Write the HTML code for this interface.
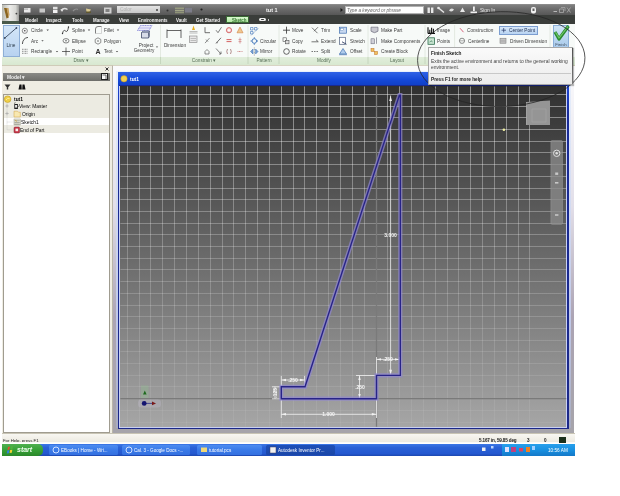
<!DOCTYPE html>
<html><head><meta charset="utf-8">
<style>
html,body{margin:0;padding:0;width:620px;height:496px;overflow:hidden;background:#fff;font-family:"Liberation Sans",sans-serif;}
.a{position:absolute;}
.t{position:absolute;line-height:10px;color:#3a3a3a;white-space:nowrap;will-change:transform;}
svg{position:absolute;left:0;top:0;overflow:visible;}
</style></head><body>
<div class="a" style="left:1.5px;top:4px;width:573.5px;height:10.5px;background:linear-gradient(#9a9a9a 0,#808080 8%,#6a6a6a 50%,#575757 100%);"></div>
<div class="a" style="left:1.5px;top:14.5px;width:573.5px;height:9px;background:#3a3d3a;"></div>
<div class="a" style="left:2px;top:4.9px;width:17.3px;height:18.6px;background:linear-gradient(90deg,#b8b8b0,#ececea 45%,#d8d8d4 80%,#9a9a98);"></div>
<div class="a" style="left:2px;top:20.5px;width:17.3px;height:3px;background:#4a5a4a;"></div>
<svg width="620" height="60">
<path d="M4 8L7 8L8.8 17.5L6.5 18.5Z" fill="#8a6420"/>
<path d="M6.5 8L8.5 8L9.5 15L8.5 17Z" fill="#c8a060"/>
<circle cx="16.4" cy="13.6" r="0.9" fill="#404040"/>
<rect x="24" y="8" width="6.5" height="4.5" fill="#e8e8e8"/><rect x="24" y="8.5" width="4" height="1.2" fill="#b0b0b0"/>
<rect x="39.5" y="8.5" width="5.5" height="4" fill="#c8c8c8"/>
<rect x="53" y="6.8" width="4.5" height="2.6" fill="#e0e0e0"/><rect x="53" y="10" width="4.5" height="3" fill="#f0f0f0"/>
<path d="M61 10.5Q64 7 67.5 9.5" stroke="#e0e0e0" stroke-width="1.4" fill="none"/><path d="M60.5 9L62 12L63.5 9.5Z" fill="#e0e0e0"/>
<path d="M73 11Q75.5 8 78 9.5" stroke="#909090" stroke-width="1.2" fill="none"/>
<path d="M86 8.5L91 9.5L89 12.5L86.5 12Z" fill="#d8c890"/><rect x="86" y="11.5" width="5" height="1.5" fill="#605830"/>
<rect x="104" y="7.5" width="7.5" height="6" fill="#d0d0d0"/><rect x="105.5" y="9" width="4" height="3" fill="#808080"/>
<rect x="175" y="7.5" width="9" height="1.6" fill="#989c80"/><rect x="175" y="9.8" width="9" height="1.6" fill="#a4a888"/><rect x="175" y="12" width="9" height="1.3" fill="#909478"/><rect x="185" y="8" width="7" height="4.5" fill="#7c7c88"/>
<circle cx="167.5" cy="10.5" r="1" fill="#303030"/>
<circle cx="201.5" cy="9.5" r="1.1" fill="#202020"/>
<path d="M340.5 8L343 10L340.5 12Z" fill="#1a1a1a"/>
<rect x="427.5" y="7.5" width="2.4" height="5.5" fill="#e8e8e8"/><rect x="431" y="7.5" width="2.4" height="5.5" fill="#e8e8e8"/>
<path d="M438 7.5L444 12.5" stroke="#e8e8e8" stroke-width="1.5"/><circle cx="438.5" cy="8" r="1.3" fill="#e8e8e8"/>
<path d="M449 10.5Q451 7 454 9.5Q452 13 449 10.5Z" fill="#e0e0e0"/>
<path d="M462.5 7.5L465 12H460Z" fill="#e8e8e8"/>
<rect x="473" y="6.5" width="1.8" height="4.5" fill="#f0f0f0"/><rect x="470.5" y="11.5" width="6.5" height="1.6" fill="#f0f0f0"/>
<rect x="531" y="7" width="5" height="6.5" rx="2" fill="#f0f0f0"/><rect x="532.5" y="8.5" width="2" height="2.5" fill="#606060"/>
<rect x="553.5" y="11" width="3.5" height="1" fill="#b8b8b8"/>
<path d="M559.5 9H563.5V12.5H559.5ZM561 7.5H565V11" fill="none" stroke="#a8a8a8" stroke-width="0.8"/>
<path d="M567 7.5L570.5 12.5M570.5 7.5L567 12.5" stroke="#a0a0a0" stroke-width="1"/>
</svg>
<div class="a" style="left:117px;top:5.6px;width:43px;height:7.6px;background:linear-gradient(#e4e4e4,#c8c8c8);"></div>
<div class="t" style="left:120px;top:5px;font-size:4.9px;color:#b0b0b0;">Color</div>
<div class="a" style="left:156px;top:8.5px;width:2px;height:2px;background:#404040;border-radius:1px;"></div>
<div class="t" style="left:265.5px;top:5px;font-size:5.5px;color:#f4f4f4;font-weight:bold;">tut 1</div>
<div class="a" style="left:344.5px;top:5.5px;width:79.5px;height:8.8px;background:#fdfdfd;border:0.5px solid #b0b0b0;box-sizing:border-box;"></div>
<div class="t" style="left:347px;top:6px;font-size:4.7px;color:#6a6a6a;font-style:italic;">Type a keyword or phrase</div>
<div class="t" style="left:479.5px;top:6px;font-size:4.9px;color:#e8e8e8;">Sign In</div>
<div class="a" style="left:225.8px;top:15.6px;width:23.5px;height:7.9px;background:linear-gradient(#d8f8d0,#b0e8a0);border:0.6px solid #3a6a34;box-sizing:border-box;"></div>
<div class="t" style="left:24.8px;top:16px;font-size:4.45px;color:#f4f4f4;font-weight:bold;">Model</div>
<div class="t" style="left:46px;top:16px;font-size:4.45px;color:#f4f4f4;font-weight:bold;">Inspect</div>
<div class="t" style="left:72.2px;top:16px;font-size:4.45px;color:#f4f4f4;font-weight:bold;">Tools</div>
<div class="t" style="left:92.5px;top:16px;font-size:4.45px;color:#f4f4f4;font-weight:bold;">Manage</div>
<div class="t" style="left:118.6px;top:16px;font-size:4.45px;color:#f4f4f4;font-weight:bold;">View</div>
<div class="t" style="left:137.9px;top:16px;font-size:4.45px;color:#f4f4f4;font-weight:bold;">Environments</div>
<div class="t" style="left:176.3px;top:16px;font-size:4.45px;color:#f4f4f4;font-weight:bold;">Vault</div>
<div class="t" style="left:195.5px;top:16px;font-size:4.45px;color:#f4f4f4;font-weight:bold;">Get Started</div>
<div class="t" style="left:231.5px;top:16px;font-size:4.45px;color:#3e7a38;font-weight:bold;">Sketch</div>
<div class="a" style="left:258.5px;top:17.8px;width:7px;height:3.6px;background:#f0f0f0;border-radius:2px;"></div>
<div class="a" style="left:260.5px;top:18.8px;width:3px;height:1.6px;background:#3a3d3a;border-radius:1px;"></div>
<div class="a" style="left:267.5px;top:19px;width:1.5px;height:1.5px;background:#c0c0c0;"></div>
<div class="a" style="left:1.5px;top:23.5px;width:573.5px;height:33px;background:#f7faf8;"></div>
<div class="a" style="left:1.5px;top:56.5px;width:573.5px;height:8.3px;background:linear-gradient(#e2eedc,#d8e8d0);"></div>
<div class="a" style="left:1.5px;top:64.8px;width:573.5px;height:1px;background:#cfcbb8;"></div>
<div class="a" style="left:2.5px;top:24.5px;width:17px;height:32px;background:linear-gradient(#d4e6f8,#b8d2f0);border:0.6px solid #8eaed6;box-sizing:border-box;"></div>
<div class="a" style="left:499.3px;top:26.2px;width:38.7px;height:8.8px;background:linear-gradient(#d8e8fa,#b8d4f2);border:0.6px solid #7c9ed0;box-sizing:border-box;"></div>
<div class="a" style="left:552.7px;top:24.5px;width:16.8px;height:23.5px;background:linear-gradient(#d0e4f6,#aacbec);border:0.6px solid #8aaed8;box-sizing:border-box;"></div>
<div class="t" style="left:-29.00px;width:80px;text-align:center;top:41px;font-size:4.7px;color:#304050;">Line</div>
<div class="t" style="left:30.9px;top:26px;font-size:4.7px;color:#3a3a3a;">Circle</div>
<div class="t" style="left:31px;top:37px;font-size:4.7px;color:#3a3a3a;">Arc</div>
<div class="t" style="left:31px;top:47px;font-size:4.7px;color:#3a3a3a;">Rectangle</div>
<div class="t" style="left:72px;top:26px;font-size:4.7px;color:#3a3a3a;">Spline</div>
<div class="t" style="left:72px;top:37px;font-size:4.7px;color:#3a3a3a;">Ellipse</div>
<div class="t" style="left:72px;top:47px;font-size:4.7px;color:#3a3a3a;">Point</div>
<div class="t" style="left:104px;top:26px;font-size:4.7px;color:#3a3a3a;">Fillet</div>
<div class="t" style="left:104px;top:37px;font-size:4.7px;color:#3a3a3a;">Polygon</div>
<div class="t" style="left:104px;top:47px;font-size:4.7px;color:#3a3a3a;">Text</div>
<div class="t" style="left:106.00px;width:80px;text-align:center;top:41px;font-size:4.7px;color:#3a3a3a;">Project</div>
<div class="t" style="left:103.80px;width:80px;text-align:center;top:46px;font-size:4.7px;color:#3a3a3a;">Geometry</div>
<div class="t" style="left:134.50px;width:80px;text-align:center;top:41px;font-size:4.7px;color:#3a3a3a;">Dimension</div>
<div class="t" style="left:260.3px;top:37px;font-size:4.7px;color:#3a3a3a;">Circular</div>
<div class="t" style="left:260.3px;top:47px;font-size:4.7px;color:#3a3a3a;">Mirror</div>
<div class="t" style="left:292px;top:26px;font-size:4.7px;color:#3a3a3a;">Move</div>
<div class="t" style="left:292px;top:37px;font-size:4.7px;color:#3a3a3a;">Copy</div>
<div class="t" style="left:292px;top:47px;font-size:4.7px;color:#3a3a3a;">Rotate</div>
<div class="t" style="left:321px;top:26px;font-size:4.7px;color:#3a3a3a;">Trim</div>
<div class="t" style="left:321px;top:37px;font-size:4.7px;color:#3a3a3a;">Extend</div>
<div class="t" style="left:321px;top:47px;font-size:4.7px;color:#3a3a3a;">Split</div>
<div class="t" style="left:350px;top:26px;font-size:4.7px;color:#3a3a3a;">Scale</div>
<div class="t" style="left:350px;top:37px;font-size:4.7px;color:#3a3a3a;">Stretch</div>
<div class="t" style="left:350px;top:47px;font-size:4.7px;color:#3a3a3a;">Offset</div>
<div class="t" style="left:381px;top:26px;font-size:4.7px;color:#3a3a3a;">Make Part</div>
<div class="t" style="left:381px;top:37px;font-size:4.7px;color:#3a3a3a;">Make Components</div>
<div class="t" style="left:381px;top:47px;font-size:4.7px;color:#3a3a3a;">Create Block</div>
<div class="t" style="left:437px;top:26px;font-size:4.7px;color:#3a3a3a;">Image</div>
<div class="t" style="left:437px;top:37px;font-size:4.7px;color:#3a3a3a;">Points</div>
<div class="t" style="left:467px;top:26px;font-size:4.7px;color:#3a3a3a;font-style:italic;">Construction</div>
<div class="t" style="left:467.6px;top:37px;font-size:4.7px;color:#3a3a3a;">Centerline</div>
<div class="t" style="left:508.7px;top:26px;font-size:4.7px;color:#203050;">Center Point</div>
<div class="t" style="left:509.7px;top:37px;font-size:4.7px;color:#3a3a3a;">Driven Dimension</div>
<div class="t" style="left:521.00px;width:80px;text-align:center;top:40px;font-size:4.3px;color:#405060;">Finish</div>
<div class="t" style="left:40.50px;width:80px;text-align:center;top:56px;font-size:4.7px;color:#587058;">Draw &#9662;</div>
<div class="t" style="left:164.00px;width:80px;text-align:center;top:56px;font-size:4.7px;color:#587058;">Constrain &#9662;</div>
<div class="t" style="left:224.00px;width:80px;text-align:center;top:56px;font-size:4.7px;color:#587058;">Pattern</div>
<div class="t" style="left:283.50px;width:80px;text-align:center;top:56px;font-size:4.7px;color:#587058;">Modify</div>
<div class="t" style="left:356.50px;width:80px;text-align:center;top:56px;font-size:4.7px;color:#587058;">Layout</div>
<svg width="620" height="70">
<path d="M160.5 25V56" stroke="#dde4da" stroke-width="0.8"/><path d="M248 25V56" stroke="#dde4da" stroke-width="0.8"/><path d="M279 25V56" stroke="#dde4da" stroke-width="0.8"/><path d="M368 25V56" stroke="#dde4da" stroke-width="0.8"/><path d="M425 25V56" stroke="#dde4da" stroke-width="0.8"/><path d="M454.6 25V56" stroke="#dde4da" stroke-width="0.8"/><path d="M550 25V56" stroke="#dde4da" stroke-width="0.8"/><path d="M160.5 56.5V64" stroke="#c0d0b8" stroke-width="0.8"/><path d="M248 56.5V64" stroke="#c0d0b8" stroke-width="0.8"/><path d="M279 56.5V64" stroke="#c0d0b8" stroke-width="0.8"/><path d="M368 56.5V64" stroke="#c0d0b8" stroke-width="0.8"/><path d="M425 56.5V64" stroke="#c0d0b8" stroke-width="0.8"/><path d="M4.8 38L16.4 28" stroke="#3a4a60" stroke-width="0.9"/><circle cx="4.8" cy="38" r="0.9" fill="#3a4a60"/><circle cx="16.4" cy="28" r="0.9" fill="#3a4a60"/><circle cx="24.8" cy="30.8" r="2.6" fill="#f4f4f4" stroke="#606060" stroke-width="0.7"/><circle cx="24.8" cy="30.8" r="0.8" fill="#404040"/><path d="M46.5 29.599999999999998H48.900000000000006L47.7 31.0Z" fill="#505050"/><path d="M41.3 40.199999999999996H43.7L42.5 41.599999999999994Z" fill="#505050"/><path d="M55.8 50.9H58.2L57 52.3Z" fill="#505050"/><path d="M87.8 29.599999999999998H90.2L89 31.0Z" fill="#505050"/><path d="M116.8 29.599999999999998H119.2L118 31.0Z" fill="#505050"/><path d="M115.8 50.9H118.2L117 52.3Z" fill="#505050"/><path d="M155.8 46.4H158.2L157 47.8Z" fill="#505050"/><path d="M22.4 44Q22.8 38 28 37.4" stroke="#404040" stroke-width="0.9" fill="none"/><path d="M22 49.3H28M22 51.3H28M22 53.3H28" stroke="#606060" stroke-width="0.7" stroke-dasharray="1 0.5"/><path d="M62.5 33.5Q63.5 29 65.5 31Q67.5 33 68.5 27" stroke="#404040" stroke-width="0.9" fill="none"/><circle cx="62.5" cy="33.5" r="0.7" fill="#303030"/><circle cx="68.5" cy="27" r="0.7" fill="#303030"/><ellipse cx="66" cy="40.8" rx="3" ry="2.2" fill="none" stroke="#505050" stroke-width="0.7"/><circle cx="66" cy="40.8" r="0.7" fill="#404040"/><path d="M62 51.5H70M66 47.5V55.5" stroke="#303030" stroke-width="0.7"/><path d="M95.5 33.5V29Q95.5 26.5 98 26.5H101.5" stroke="#606060" stroke-width="0.8" fill="none"/><path d="M95.5 33.5H101.5V26.5" stroke="#b0b0b0" stroke-width="0.5" fill="none"/><path d="M98 37.8L100.8 39.4V42.6L98 44.2L95.2 42.6V39.4Z" fill="none" stroke="#606060" stroke-width="0.7"/><circle cx="98" cy="41" r="0.7" fill="#404040"/><text x="98" y="54.2" font-family="Liberation Sans" font-size="7" font-weight="bold" fill="#303030" text-anchor="middle">A</text><path d="M137.5 30.5L140.5 25.5H152L149 30.5Z" fill="#e8e8f8" stroke="#6a6ad0" stroke-width="0.7" stroke-dasharray="1.2 0.5"/><path d="M139 28H150.5" stroke="#8a8ae0" stroke-width="0.5"/><path d="M141.5 32.5H148.5V38H141.5Z" fill="#d8dce8" stroke="#404a68" stroke-width="0.8"/><path d="M141.5 32.5L143 31H149.5L148.5 32.5M149.5 31V36.5L148.5 38" fill="#b0b8d0" stroke="#404a68" stroke-width="0.6"/><path d="M167 29.5V38M181 29.5V38M167 30.5H181" stroke="#404040" stroke-width="0.8" fill="none"/><path d="M189.5 31.5H197.5M189.5 33H197.5" stroke="#909090" stroke-width="0.6"/><path d="M193.5 25.5L195 30H192Z" fill="#e8b020"/><rect x="189.5" y="36" width="7.5" height="6.5" fill="#e8e8e8" stroke="#808080" stroke-width="0.6"/><path d="M190.5 38.5H196M190.5 40.5H196" stroke="#909090" stroke-width="0.5"/><path d="M205 27.2V32.7H210" stroke="#606060" stroke-width="0.9" fill="none"/><path d="M216 30.2L218 32.7L221.5 27.2" stroke="#606060" stroke-width="0.8" fill="none"/><circle cx="229" cy="30.2" r="2.6" fill="#f8d8d8" stroke="#d06060" stroke-width="0.9"/><circle cx="229" cy="30.2" r="1" fill="#fff"/><path d="M240 27.0L243 32.8H237Z" fill="#f0c890" stroke="#d08040" stroke-width="0.6"/><path d="M205 43.099999999999994L209.5 38.099999999999994M206 39.599999999999994L208 41.599999999999994" stroke="#707070" stroke-width="0.8"/><path d="M216 43.39999999999999L221 37.8" stroke="#606060" stroke-width="0.9"/><circle cx="217" cy="42.599999999999994" r="0.8" fill="#808080"/><path d="M226.5 39.599999999999994H231.5M226.5 41.599999999999994H231.5" stroke="#d05050" stroke-width="0.9"/><path d="M240 37.599999999999994V43.599999999999994M238.5 39.599999999999994H241.5M238.5 41.599999999999994H241.5" stroke="#d08080" stroke-width="0.7"/><path d="M205 54.0V51.5L207 49.5L209 51.5V54.0Z" fill="none" stroke="#707070" stroke-width="0.8"/><path d="M216 48.5L221 54.0M219 54.0H221V51.5" stroke="#606060" stroke-width="0.8" fill="none"/><path d="M227.5 49.0Q226 51.5 227.5 54.0M230.5 49.0Q232 51.5 230.5 54.0" stroke="#a07070" stroke-width="0.8" fill="none"/><path d="M237.5 51.5H242.5" stroke="#d09090" stroke-width="1.2" stroke-dasharray="1 0.5"/><path d="M250.5 27.5H253V30H250.5ZM254.5 27.5H257V30H254.5ZM250.5 31.5H253V34H250.5Z" fill="none" stroke="#3a70b8" stroke-width="0.6"/><path d="M251 35.5L258.5 28" stroke="#6a90c0" stroke-width="0.5"/><circle cx="254.3" cy="41" r="2.3" fill="none" stroke="#3a70b8" stroke-width="0.9"/><path d="M254.3 37.3V38.5M254.3 43.5V44.7M250.6 41H251.8M256.8 41H258" stroke="#3a70b8" stroke-width="1"/><path d="M254.3 47.5V55.5" stroke="#404040" stroke-width="0.5" stroke-dasharray="1 0.5"/><path d="M253 49L250.5 51.5L253 54ZM255.6 49L258.1 51.5L255.6 54Z" fill="#7aa0d0" stroke="#3a70b8" stroke-width="0.5"/><path d="M283 30.2H290M286.5 26.7V33.7" stroke="#303030" stroke-width="0.8"/><rect x="283" y="37.8" width="3.5" height="3.5" fill="none" stroke="#505050" stroke-width="0.6"/><rect x="285.5" y="40.3" width="3.5" height="3.5" fill="#ddd" stroke="#505050" stroke-width="0.6"/><circle cx="286.5" cy="51.5" r="2.8" fill="none" stroke="#404040" stroke-width="0.8"/><path d="M312 27.7L317.5 33.2M314 31.2L318 27.2" stroke="#404040" stroke-width="0.7"/><path d="M311.5 41.8H318M316 39.8L318.5 41.8" stroke="#404040" stroke-width="0.7" fill="none"/><path d="M311.5 51.5H318.5" stroke="#404040" stroke-width="0.7" stroke-dasharray="1.5 1"/><rect x="339.5" y="27.2" width="7" height="6" fill="#c8d8f0" stroke="#4070b0" stroke-width="0.7"/><rect x="340.5" y="28.2" width="3" height="2.5" fill="#fff" stroke="#4070b0" stroke-width="0.4"/><rect x="339.5" y="37.3" width="6" height="7" fill="#fff" stroke="#506080" stroke-width="0.7"/><path d="M342 41.8L346.5 44.3" stroke="#304060" stroke-width="0.9"/><path d="M339.5 54.0L343 48.5L346.5 54.0Z" fill="#b0ccec" stroke="#4070b0" stroke-width="0.7"/><path d="M339 54.7H347" stroke="#4070b0" stroke-width="0.7"/><path d="M371 27.2H378V31.2Q374.5 34.2 371 31.2Z" fill="#c8c8d0" stroke="#606070" stroke-width="0.6"/><rect x="371" y="38.8" width="3.5" height="5" fill="#d0d0d8" stroke="#606070" stroke-width="0.5"/><path d="M376.5 37.3V43.8" stroke="#606070" stroke-width="0.6"/><rect x="371" y="48.5" width="3" height="3" fill="#f0c060" stroke="#c07020" stroke-width="0.5"/><rect x="374.5" y="51.5" width="3" height="3" fill="#f0c060" stroke="#c07020" stroke-width="0.5"/><path d="M428 33.4V27.2M428 33.4H435M429.8 32.7V29.7M431.6 32.7V27.7M433.4 32.7V28.7" stroke="#101010" stroke-width="1.1"/><rect x="428" y="37.8" width="6.5" height="6.5" fill="#c8e4d0" stroke="#307050" stroke-width="0.8"/><path d="M429.5 42.3L431 40.8L432.5 41.8" stroke="#206040" stroke-width="0.6" fill="none"/><path d="M460 28.2L463.5 32.2" stroke="#d04060" stroke-width="0.8"/><circle cx="462" cy="40.8" r="2.6" fill="none" stroke="#606060" stroke-width="0.7"/><path d="M459.5 40.8H464.5" stroke="#606060" stroke-width="0.5"/><path d="M501.5 30.2H506M503.7 28.0V32.4" stroke="#203060" stroke-width="0.7"/><rect x="500" y="38.199999999999996" width="6" height="5" fill="#c8c8c8" stroke="#707070" stroke-width="0.5"/><path d="M500.5 40.3H505.5M500.5 41.8H505.5" stroke="#888" stroke-width="0.4"/><path d="M555 32L559 39L568.5 26" stroke="#2a8a30" stroke-width="3.2" fill="none" stroke-linejoin="round"/><path d="M555.5 32.3L559 38L568 26.5" stroke="#70c868" stroke-width="1.2" fill="none"/></svg>
<div class="a" style="left:1.5px;top:65.5px;width:110.5px;height:368px;background:#efede3;"></div>
<div class="a" style="left:2.5px;top:72.5px;width:107.5px;height:8.8px;background:linear-gradient(#8a8a86,#6e6e6a);"></div>
<div class="t" style="left:6.5px;top:73px;font-size:4.9px;color:#f0f0f0;font-weight:bold;">Model &#9662;</div>
<div class="a" style="left:100.8px;top:73.4px;width:7px;height:7px;background:#f8f8f8;border:0.8px solid #202020;box-sizing:border-box;"></div>
<div class="a" style="left:3.2px;top:94px;width:106.8px;height:339px;background:#fff;border:0.8px solid #a09c90;box-sizing:border-box;"></div>
<div class="a" style="left:4px;top:95px;width:105.2px;height:22.5px;background:#ecebe2;"></div>
<div class="a" style="left:4px;top:125px;width:105.2px;height:7.5px;background:#ecebe2;"></div>
<svg width="620" height="140">
<path d="M105.5 67.5L108.5 70.5M108.5 67.5L105.5 70.5" stroke="#202020" stroke-width="0.9"/>
<path d="M102.5 75H106V79" fill="none" stroke="#303030" stroke-width="0.7"/>
<path d="M4.5 84.5H10.5L8.2 87.2V89.5H6.8V87.2Z" fill="#303030"/>
<path d="M18.5 89.5L19.5 84.5H21.5L21.8 89.5ZM22.2 89.5L22.5 84.5H24.5L25.5 89.5Z" fill="#101010"/>
<circle cx="7.6" cy="99.2" r="3.3" fill="#f0d048" stroke="#c09a20" stroke-width="0.6"/>
<path d="M6 100Q7.5 97.5 9.5 98.5" stroke="#fff4b0" stroke-width="0.8" fill="none"/>
<path d="M7 103V130" stroke="#b8b8b8" stroke-width="0.5" stroke-dasharray="0.6 0.6"/>
<path d="M7 122H13M7 129.8H13" stroke="#b8b8b8" stroke-width="0.5" stroke-dasharray="0.6 0.6"/>
<path d="M5.3 106H8.7M5.3 113.5H8.7M7 104.3V107.7M7 111.8V115.2" stroke="#a0a0a0" stroke-width="0.6"/>
<rect x="14.3" y="104" width="3.6" height="5" fill="#202020"/><rect x="15.1" y="105" width="2" height="2.6" fill="#e8e8e8"/>
<path d="M14 103.5L15.5 102.6" stroke="#202020" stroke-width="0.6"/><path d="M17.9 106.3H19" stroke="#303030" stroke-width="0.6"/>
<path d="M14 111.2H17.5L18.5 112.2H20.3V117H14Z" fill="#f8e8b0" stroke="#d0a040" stroke-width="0.5"/>
<rect x="14" y="119" width="6.3" height="6" fill="#ececdc" stroke="#808070" stroke-width="0.4"/>
<path d="M14.5 120.8H19.8M14.5 122.6H19.8M14.5 124.2H19.8" stroke="#505050" stroke-width="0.45"/>
<path d="M15 120L17 121.5" stroke="#d0a020" stroke-width="0.6"/>
<rect x="14" y="127" width="5.6" height="6" rx="1" fill="#c83848" stroke="#802030" stroke-width="0.5"/>
<rect x="15.5" y="128.6" width="2.6" height="2.6" fill="#f8f0f0"/>
</svg>
<div class="t" style="left:14px;top:95px;font-size:4.9px;color:#000000;font-weight:bold;">tut1</div>
<div class="t" style="left:18.8px;top:102px;font-size:4.9px;color:#0a0a0a;">View: Master</div>
<div class="t" style="left:21.5px;top:110px;font-size:4.9px;color:#0a0a0a;">Origin</div>
<div class="t" style="left:21px;top:118px;font-size:4.9px;color:#0a0a0a;">Sketch1</div>
<div class="t" style="left:20.2px;top:126px;font-size:4.9px;color:#0a0a0a;">End of Part</div>
<div class="a" style="left:112px;top:65px;width:462px;height:369px;background:linear-gradient(#fbfbfd 0,#e2dfe9 38%,#aca4b4 68%,#a6a4aa 100%);border-left:1px solid #b8b4a8;border-top:1px solid #d8d4c4;box-sizing:border-box;"></div>
<div class="a" style="left:116px;top:71px;width:454.5px;height:357px;background:linear-gradient(#e8f0fc,#c0c8e8 70%,#a8acc0);"></div>
<div class="a" style="left:117.6px;top:72px;width:451.6px;height:357.2px;background:linear-gradient(#2a5ae0 0,#1c40c8 6%,#1a2c98 12%,#1c2888 100%);"></div>
<div class="a" style="left:118.4px;top:72.3px;width:450px;height:13px;background:linear-gradient(#2f62e6,#1448d8 60%,#1040c8);"></div>
<div class="a" style="left:119.2px;top:85.4px;width:448.3px;height:342.6px;background:#c8d0f4;"></div>
<div class="a" style="left:119.2px;top:85.2px;width:448.3px;height:1px;background:#1a2a90;"></div>
<div class="a" style="left:120.2px;top:86.2px;width:446.3px;height:340.6px;background:linear-gradient(#303030 0%,#6a6a6a 50%,#a6a6a6 100%);"></div>
<div class="t" style="left:129.5px;top:75px;font-size:4.9px;color:#ffffff;font-weight:bold;">tut1</div>
<svg width="620" height="496">
<circle cx="124" cy="78.8" r="3.2" fill="#f0d050" stroke="#c09020" stroke-width="0.5"/>
<defs><linearGradient id="gg" gradientUnits="userSpaceOnUse" x1="0" y1="86" x2="0" y2="427"><stop offset="0" stop-color="#fff" stop-opacity="0.46"/><stop offset="0.5" stop-color="#fff" stop-opacity="0.23"/><stop offset="0.8" stop-color="#fff" stop-opacity="0.12"/><stop offset="1" stop-color="#fff" stop-opacity="0.06"/></linearGradient><clipPath id="gc"><rect x="120.2" y="86.2" width="446.3" height="340.6"/></clipPath></defs>
<g clip-path="url(#gc)">
<path d="M127.5 86.2V426.8M139.5 86.2V426.8M150.5 86.2V426.8M162.5 86.2V426.8M174.5 86.2V426.8M186.5 86.2V426.8M198.5 86.2V426.8M210.5 86.2V426.8M222.5 86.2V426.8M233.5 86.2V426.8M245.5 86.2V426.8M257.5 86.2V426.8M269.5 86.2V426.8M281.5 86.2V426.8M293.5 86.2V426.8M304.5 86.2V426.8M316.5 86.2V426.8M328.5 86.2V426.8M340.5 86.2V426.8M352.5 86.2V426.8M364.5 86.2V426.8M387.5 86.2V426.8M399.5 86.2V426.8M411.5 86.2V426.8M423.5 86.2V426.8M435.5 86.2V426.8M447.5 86.2V426.8M458.5 86.2V426.8M470.5 86.2V426.8M482.5 86.2V426.8M494.5 86.2V426.8M506.5 86.2V426.8M518.5 86.2V426.8M529.5 86.2V426.8M120.2 94.5H566.5M120.2 106.5H566.5M120.2 117.5H566.5M120.2 129.5H566.5M120.2 141.5H566.5M120.2 152.5H566.5M120.2 164.5H566.5M120.2 176.5H566.5M120.2 188.5H566.5M120.2 199.5H566.5M120.2 211.5H566.5M120.2 223.5H566.5M120.2 234.5H566.5M120.2 246.5H566.5M120.2 258.5H566.5M120.2 269.5H566.5M120.2 281.5H566.5M120.2 293.5H566.5M120.2 305.5H566.5M120.2 316.5H566.5M120.2 328.5H566.5M120.2 340.5H566.5M120.2 351.5H566.5M120.2 363.5H566.5M120.2 375.5H566.5M120.2 386.5H566.5M120.2 410.5H566.5M120.2 422.5H566.5" stroke="url(#gg)" stroke-width="1" fill="none"/>
<path d="M120.2 398.6H566.5M376.5 86.2V427" stroke="#7a7a7a" stroke-width="1.3" fill="none"/>

<g stroke="#f2f2f2" stroke-width="0.8" fill="none">
<path d="M281.6 380H304.4M281.3 376V386M304.6 376V386"/>
<path d="M275 386.8V398.8M272 386.8H281M272 398.8H281"/>
<path d="M281.3 399V418M376.5 399V418M281.3 414.3H376.5"/>
<path d="M359.5 375.6V398.2M356 375.5H376.5"/>
<path d="M376.5 357V375M399.4 357V375M376.5 359.4H399.4"/>
<path d="M390.6 95.5V374.7"/>
</g>
<g fill="#f2f2f2">
<path d="M390.6 96L389.2 101L392 101Z"/><path d="M390.6 374.7L389.2 369.7L392 369.7Z"/>
<path d="M281.6 380L286 378.8V381.2Z"/><path d="M304.4 380L300 378.8V381.2Z"/>
<path d="M281.3 414.3L286 413V415.6Z"/><path d="M376.5 414.3L371.8 413V415.6Z"/>
<path d="M376.5 359.4L381 358.2V360.6Z"/><path d="M399.4 359.4L395 358.2V360.6Z"/>
<path d="M359.5 375.6L358.3 380H360.7Z"/><path d="M359.5 398.2L358.3 394H360.7Z"/>
</g>
<g font-family="Liberation Sans" font-size="5" fill="#f6f6f6" font-weight="bold">
<text x="293" y="381.8" text-anchor="middle">.250</text>
<text x="328.5" y="416.1" text-anchor="middle">1.000</text>
<text x="360" y="388.8" text-anchor="middle">.250</text>
<text x="388" y="361.1" text-anchor="middle">.250</text>
<text x="390.6" y="236.6" text-anchor="middle">3.000</text>
<text x="0" y="0" text-anchor="middle" transform="translate(276.5 392.8) rotate(-90)">.125</text>
</g>
<path d="M281.3 398.7H376.5V375.4H400.3V95.1L399.4 95.1L305.0 386.8H281.3Z" stroke="#9088d0" stroke-width="4.2" fill="none" opacity="0.7"/>
<path d="M281.3 398.7H376.5V375.4H400.3V95.1L399.4 95.1L305.0 386.8H281.3Z" stroke="#282488" stroke-width="1.4" fill="none"/>
<rect x="141" y="385.5" width="7.5" height="12.5" fill="#90c890" opacity="0.3"/>
<path d="M144.8 390.5L143 394.5H146.6Z" fill="#1e6a1e"/>
<rect x="138" y="399.5" width="23" height="8" rx="3" fill="#d0c8e0" opacity="0.25"/>
<path d="M144.2 403.4H152" stroke="#303080" stroke-width="0.8"/>
<circle cx="144.2" cy="403.4" r="2.4" fill="#141470"/>
<path d="M156 403.4L152 401.5V405.3Z" fill="#7a1818"/>
<circle cx="503.9" cy="129.8" r="1.3" fill="#f0f0a0"/>
<path d="M526.5 102L550 100.5V125H526.5Z" fill="#959595"/>
<path d="M532 109H546V122H532Z" fill="none" stroke="#a4a4a4" stroke-width="0.7"/>
<path d="M526.5 125V102" stroke="#b0b0b0" stroke-width="0.8"/>
<rect x="550.9" y="140.6" width="11.6" height="83.7" rx="1.2" fill="#8c8c8c" opacity="0.75" stroke="#a8a8a8" stroke-width="0.6"/>
<circle cx="556.7" cy="153.3" r="3.2" fill="none" stroke="#e0e0e0" stroke-width="1"/>
<circle cx="556.7" cy="153.3" r="1.2" fill="#e0e0e0"/>
<rect x="555.2" y="172.5" width="3" height="2.4" fill="#c8c8c8"/>
<rect x="555" y="182" width="3.4" height="1.6" fill="#c8c8c8"/>
<rect x="555" y="214" width="3.4" height="2" fill="#b8b8b8"/>
</g>
</svg>
<svg width="620" height="496"><ellipse cx="501.25" cy="59.1" rx="83.7" ry="47.4" transform="rotate(-1 501.25 59.1)" fill="none" stroke="#252525" stroke-width="0.9" opacity="0.85"/></svg>
<div class="a" style="left:428.2px;top:46.6px;width:145.3px;height:38px;background:linear-gradient(#fafafa,#ececec);border:0.6px solid #a8a8a8;box-sizing:border-box;box-shadow:1px 1px 1px rgba(0,0,0,0.25);"></div>
<div class="a" style="left:572.2px;top:47.5px;width:1.3px;height:36.5px;background:linear-gradient(#505050,#787878);"></div>
<div class="a" style="left:430px;top:73.2px;width:141px;height:0.6px;background:#c8c8c8;"></div>
<div class="t" style="left:430.5px;top:49px;font-size:4.7px;color:#202020;font-weight:bold;">Finish Sketch</div>
<div class="t" style="left:430.5px;top:57px;font-size:4.9px;color:#404040;">Exits the active environment and returns to the general working</div>
<div class="t" style="left:430.5px;top:63px;font-size:4.9px;color:#404040;">environment.</div>
<div class="t" style="left:430.5px;top:75px;font-size:4.7px;color:#202020;font-weight:bold;">Press F1 for more help</div>
<div class="a" style="left:1.5px;top:433.2px;width:573.5px;height:10.3px;background:linear-gradient(#f8f7f2,#ebe8de);border-top:0.6px solid #c8c4b4;box-sizing:border-box;"></div>
<div class="t" style="left:2.5px;top:436px;font-size:4.3px;color:#202020;">For Help, press F1</div>
<div class="a" style="left:1.5px;top:442.3px;width:573.5px;height:1.2px;background:#fafaf6;"></div>
<div class="t" style="left:479.3px;top:436px;font-size:4.6px;color:#202020;font-weight:bold;letter-spacing:-0.15px;">5.167 in, 59.85 deg</div>
<div class="t" style="left:527px;top:436px;font-size:4.6px;color:#202020;font-weight:bold;">3</div>
<div class="t" style="left:543.5px;top:436px;font-size:4.6px;color:#202020;font-weight:bold;">0</div>
<div class="a" style="left:558.6px;top:436.8px;width:7.8px;height:5.8px;background:#1c301c;"></div>
<div class="a" style="left:1.5px;top:443.5px;width:573.5px;height:12.5px;background:linear-gradient(#3c78e6,#2a62d6 30%,#2458d0 80%,#1d48b0);"></div>
<div class="a" style="left:1.5px;top:443.5px;width:41.5px;height:12.5px;background:linear-gradient(#50b050,#36a036 50%,#2a882a);border-radius:0 5px 5px 0;"></div>
<div class="t" style="left:16.5px;top:445px;font-size:7px;color:#f0fff0;font-weight:bold;font-style:italic;">start</div>
<div class="a" style="left:501.6px;top:443.5px;width:73.4px;height:12.5px;background:linear-gradient(#28a0ec,#1890e0 50%,#1478c8);"></div>
<div class="a" style="left:49px;top:445px;width:69px;height:10px;background:linear-gradient(#4c8cf0,#3a7ae8 50%,#3470e0);border-radius:1.5px;"></div>
<div class="t" style="left:61px;top:446px;font-size:4.6px;color:#ffffff;">EBooks | Home - Wri...</div>
<div class="a" style="left:122px;top:445px;width:68px;height:10px;background:linear-gradient(#4c8cf0,#3a7ae8 50%,#3470e0);border-radius:1.5px;"></div>
<div class="t" style="left:134px;top:446px;font-size:4.6px;color:#ffffff;">Cal. 3 - Google Docs -...</div>
<div class="a" style="left:197px;top:445px;width:65px;height:10px;background:linear-gradient(#4c8cf0,#3a7ae8 50%,#3470e0);border-radius:1.5px;"></div>
<div class="t" style="left:209px;top:446px;font-size:4.6px;color:#ffffff;">tutorial.pcs</div>
<div class="a" style="left:266px;top:445px;width:69px;height:10px;background:linear-gradient(#1e50b8,#1a46a8);border-radius:1.5px;"></div>
<div class="t" style="left:278px;top:446px;font-size:4.6px;color:#ffffff;">Autodesk Inventor Pr...</div>
<svg width="620" height="496">
<path d="M8 447L10 446.5L9.5 449.5L7.5 450Z" fill="#e05030"/><path d="M10.8 446.3L13 446L12.5 449L10.3 449.3Z" fill="#50b040"/><path d="M7.3 450.5L9.3 450.2L8.8 453.2L6.8 453.5Z" fill="#3080e0"/><path d="M10.1 450L12.3 449.7L11.8 452.7L9.6 453Z" fill="#f0d030"/>
<circle cx="56" cy="450" r="3" fill="none" stroke="#d0e0ff" stroke-width="1"/>
<circle cx="129" cy="450" r="3" fill="none" stroke="#d0e0ff" stroke-width="1"/>
<rect x="201" y="447.5" width="6" height="4.5" fill="#f0d878"/>
<rect x="270" y="447" width="6" height="6" fill="#f0f0f0" stroke="#404060" stroke-width="0.5"/>
<rect x="482" y="447.5" width="3.5" height="3.5" fill="#f0f0f0"/>
<rect x="491" y="446" width="2.5" height="2.5" fill="#c0d8ff"/>
<rect x="505" y="447" width="4" height="5" fill="#e0e0ff"/>
<rect x="511" y="447" width="5" height="5" fill="#c04080"/>
<rect x="519" y="448" width="4" height="3.5" fill="#e04060"/>
<rect x="526" y="447" width="4" height="5" fill="#f08020"/>
<rect x="532" y="446" width="3" height="4" fill="#a0d0ff"/>
</svg>
<div class="t" style="left:548px;top:446px;font-size:4.7px;color:#ffffff;">10:56 AM</div>
</body></html>
